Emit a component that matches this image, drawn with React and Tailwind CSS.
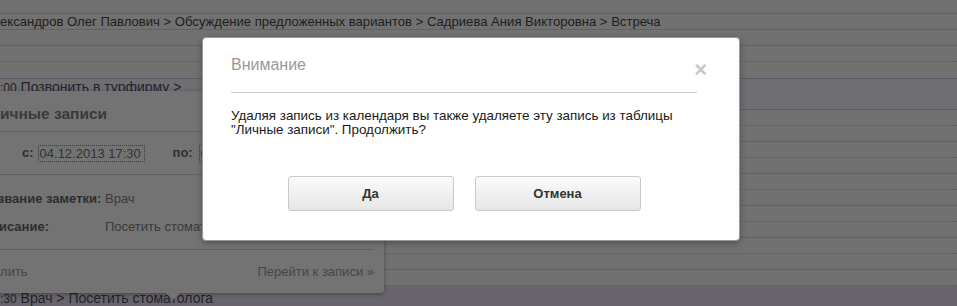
import React from 'react';

const font = { fontFamily: '"Liberation Sans", Arial, sans-serif' };

const GridRow = ({ dotted, purple, className = '', children }) => (
  <div
    className={`h-[16px] border-b ${
      purple ? 'border-[#5c5a68]' : dotted ? 'border-dotted border-[#585858]' : 'border-[#626262]'
    } ${className}`}
  >
    {children}
  </div>
);

const App = () => {
  return (
    <div className="relative w-[957px] h-[306px] overflow-hidden bg-[#717171]" style={font}>
      {/* calendar behind the overlay */}
      <div className="flex flex-col">
        <div className="h-[14px] border-b border-[#626262]" />
        <div className="h-[16px] border-b border-[#626262] text-[13.1px] leading-[16px] text-[#1e1e1e] whitespace-nowrap">
          ександров Олег Павлович &gt; Обсуждение предложенных вариантов &gt; Садриева Ания Викторовна &gt; Встреча
        </div>
        <GridRow />
        <GridRow dotted />
        <div className="h-[17px] border-b border-[#5c5a68]" />
        <div className="h-[31px] border-b border-[#5c5a68] bg-[#6f6e72] text-[14px] leading-[14px] text-[#22222c] whitespace-nowrap pt-[1px]">
          <span className="text-[12px]">:00</span> Позвонить в турфирму &gt;
        </div>
        <GridRow dotted />
        <GridRow />
        <GridRow dotted />
        <GridRow />
        <GridRow dotted />
        <GridRow />
        <GridRow dotted />
        <GridRow />
        <GridRow dotted />
        <GridRow />
        <GridRow dotted />
        <div className="h-[20px] bg-[#67646b] text-[14px] leading-[16px] text-[#22222c] whitespace-nowrap pt-[4px]">
          <span className="text-[12px]">:30</span> Врач &gt; Посетить стоматолога
        </div>
      </div>

      {/* event popover */}
      <div className="absolute left-[-30px] top-[91px] w-[414px] h-[202px] bg-[#737373] rounded-[3px] shadow-[0_1px_4px_rgba(0,0,0,0.35)]">
        <div className="pl-[19px] pt-[13px] h-[41px] border-b border-[#626262] mr-[10px] text-[15.5px] leading-[20px] font-bold text-[#3a3a3a]">
          Личные записи
        </div>
        <div className="flex items-center h-[43px] border-b border-[#626262] mr-[10px] text-[13px] text-[#2e2e2e] whitespace-nowrap">
          <span className="ml-[52px] font-bold">с:</span>
          <span className="ml-[4px] h-[17px] w-[107px] overflow-hidden border border-dotted border-[#3c3c3c] px-[1px] leading-[15px] text-[#333]">
            04.12.2013 17:30
          </span>
          <span className="ml-[28px] font-bold">по:</span>
          <span className="ml-[6px] h-[17px] w-[107px] overflow-hidden border border-dotted border-[#3c3c3c] px-[1px] leading-[15px] text-[#333]">
            04.12.2013 18:30
          </span>
        </div>
        <div className="flex flex-col gap-[12px] pt-[16px] h-[75px] border-b border-[#626262] mr-[10px] text-[13px] leading-[16px]">
          <div className="flex">
            <span className="w-[135px] shrink-0 pl-[11px] font-bold text-[#2e2e2e]">Название заметки:</span>
            <span className="text-[#3a3a3a]">Врач</span>
          </div>
          <div className="flex">
            <span className="w-[135px] shrink-0 pl-[11px] font-bold text-[#2e2e2e]">Описание:</span>
            <span className="text-[#3a3a3a]">Посетить стоматолога</span>
          </div>
        </div>
        <div className="flex justify-between items-center h-[43px] mr-[10px] pl-[8px] text-[13px] text-[#464646]">
          <span>Удалить</span>
          <span>Перейти к записи »</span>
        </div>
        <div className="absolute left-[196px] bottom-[-7px] w-0 h-0 border-l-[7px] border-r-[7px] border-t-[7px] border-l-transparent border-r-transparent border-t-[#737373]" />
      </div>

      {/* confirm dialog */}
      <div className="absolute left-[202px] top-[37px] w-[538px] h-[204px] bg-white rounded-[4px] border border-[#9a9a9a] shadow-[0_2px_6px_rgba(0,0,0,0.3)]">
        <div className="flex items-start justify-between ml-[28px] mr-[42px] pt-[17px] h-[55px] border-b border-[#cccccc]">
          <span className="text-[16px] leading-[20px] text-[#999999]">Внимание</span>
          <span className="mt-[5px] mr-[-10px] text-[22px] leading-[20px] font-bold text-[#c8c8c8]">×</span>
        </div>
        <p className="ml-[28px] mt-[16px] text-[13.4px] leading-[14px] text-[#1a1a1a] whitespace-nowrap">
          Удаляя запись из календаря вы также удаляете эту запись из таблицы
          <br />
          "Личные записи". Продолжить?
        </p>
        <div className="flex justify-center gap-[21px] mt-[39px] mr-[14px]">
          <button className="w-[166px] h-[35px] rounded-[3px] border border-[#c9c9c9] bg-gradient-to-b from-[#fbfbfb] to-[#e6e6e6] text-[13px] font-bold text-[#333]">
            Да
          </button>
          <button className="w-[166px] h-[35px] rounded-[3px] border border-[#c9c9c9] bg-gradient-to-b from-[#fbfbfb] to-[#e6e6e6] text-[13px] font-bold text-[#333]">
            Отмена
          </button>
        </div>
      </div>
    </div>
  );
};

export default App;
